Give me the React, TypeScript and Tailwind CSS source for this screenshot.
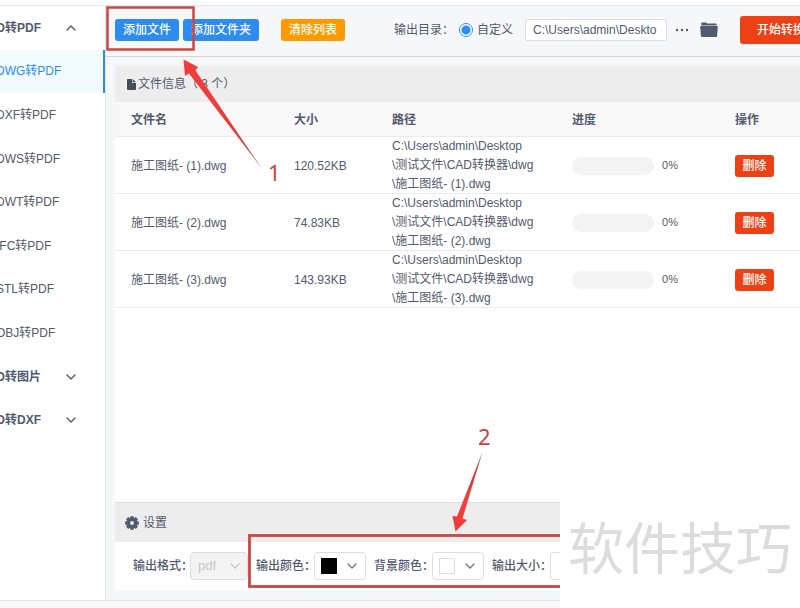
import { useState } from 'react';
import { ChevronDown, ChevronUp } from 'lucide-react';

const formats = ['DWG转PDF', 'DXF转PDF', 'DWS转PDF', 'DWT转PDF', 'IFC转PDF', 'STL转PDF', 'OBJ转PDF'];

const initialFiles = [
  { id: 1, size: '120.52KB', progress: 0 },
  { id: 2, size: '74.83KB', progress: 0 },
  { id: 3, size: '143.93KB', progress: 0 },
];

function FileIcon() {
  return (
    <svg width="9" height="11" viewBox="0 0 9 11" fill="#464c5b" aria-hidden="true">
      <path d="M.8 0H5v3.400c0 .4.200.6.600.6H9v6.200c0 .5-.3.8-.8.8H.8c-.5 0-.8-.3-.8-.8V.8C0 .3.300 0 .8 0z" />
      <path d="M5.700 0L9 3.300H5.700z" />
    </svg>
  );
}

function FolderIcon() {
  return (
    <svg width="18" height="16" viewBox="0 0 18 16" fill="#515a6e" aria-hidden="true">
      <path d="M1.300 3.500V1.600C1.300.9 1.700.5 2.400.5h3.400c.5 0 .8.2 1.100.5l.4.500h8.300c.7 0 1.100.4 1.100 1.100v.9z" />
      <path d="M1 4.100h16c.6 0 .9.300.8.9l-.7 9c-.1.600-.5.900-1 .9H1.900c-.600 0-.9-.3-1-.9l-.7-9c-.1-.6.200-.9.800-.9z" />
    </svg>
  );
}

function GearIcon() {
  return (
    <svg width="14" height="14" viewBox="0 0 14 14" aria-hidden="true">
      <g fill="#515a6e">
        <rect x="5.200" y="0.200" width="3.600" height="13.600" rx="0.600" />
        <rect x="5.200" y="0.200" width="3.600" height="13.600" rx="0.600" transform="rotate(45 7 7)" />
        <rect x="5.200" y="0.200" width="3.600" height="13.600" rx="0.600" transform="rotate(90 7 7)" />
        <rect x="5.200" y="0.200" width="3.600" height="13.600" rx="0.600" transform="rotate(135 7 7)" />
        <circle cx="7" cy="7" r="5.100" />
      </g>
      <circle cx="7" cy="7" r="1.900" fill="#ededed" />
    </svg>
  );
}

function ColorPicker({ label, swatch }: { label: string; swatch: string }) {
  return (
    <div className="flex shrink-0 items-center gap-[9px]">
      <span className="w-[49px] whitespace-nowrap font-medium">{label}：</span>
      <button aria-label={label} className="flex h-7 w-[52px] items-center justify-between rounded border border-[#dcdee2] bg-white pr-[5px] pl-1.5">
        <span className={`size-4 ${swatch}`}></span>
        <ChevronDown size={16} color="#707684" />
      </button>
    </div>
  );
}

export default function App() {
  const [files, setFiles] = useState(initialFiles);

  return (
    <div className="relative flex min-h-screen flex-col overflow-hidden bg-[#fafafa] pt-[5px] font-['Liberation_Sans','Noto_Sans_CJK_SC',sans-serif] text-xs text-[#515a6e] before:absolute before:inset-x-0 before:top-0 before:h-[5px] before:bg-white">
      <div className="flex min-w-0 flex-1 border-y border-[#e4e6ea]">
        <aside className="w-[106px] shrink-0 overflow-hidden border-r border-[#e2e4e8] bg-white">
          <nav className="-ml-6 grid h-[436px] auto-rows-fr">
            <button className="flex items-center justify-between pr-[26px] pl-[3px] font-bold">
              CAD转PDF <ChevronUp size={16} />
            </button>
            {formats.map((name, i) => (
              <a
                key={name}
                href="#"
                className={`flex items-center pl-5 ${i === 0 ? 'border-r-2 border-[#2d8cf0] bg-[#f0faff] text-[#2d8cf0]' : ''}`}
              >
                {name}
              </a>
            ))}
            <button className="flex items-center justify-between pr-[26px] pl-[3px] font-bold">
              CAD转图片 <ChevronDown size={16} />
            </button>
            <button className="flex items-center justify-between pr-[26px] pl-[3px] font-bold">
              CAD转DXF <ChevronDown size={16} />
            </button>
          </nav>
        </aside>

        <main className="flex min-w-0 flex-1 flex-col overflow-hidden bg-[#f5f7f9]">
          <header className="flex h-[51px] items-center border-b border-[#d3d5d9] pb-0.5 pl-[9px] whitespace-nowrap">
            <button className="h-[22px] w-16 shrink-0 rounded-[3px] bg-[#2d8cf0] font-medium text-white">添加文件</button>
            <button className="ml-1 h-[22px] w-[76px] shrink-0 rounded-[3px] bg-[#2d8cf0] font-medium text-white">添加文件夹</button>
            <button className="ml-[22px] h-[22px] w-16 shrink-0 rounded-[3px] bg-[#ff9900] font-medium text-white">清除列表</button>
            <span className="ml-[49px] w-[65px] shrink-0">输出目录：</span>
            <label className="flex shrink-0 items-center gap-1">
              <input
                type="radio"
                name="output"
                defaultChecked
                className="size-3.5 appearance-none rounded-full border border-[#2d8cf0] bg-white checked:bg-[radial-gradient(circle,#2d8cf0_4px,#fff_5px)]"
              />
              自定义
            </label>
            <input
              aria-label="输出目录"
              defaultValue="C:\Users\admin\Deskto"
              className="ml-3 h-[22px] w-[142px] shrink-0 rounded-xs border border-[#dcdee2] bg-white px-[7px]"
            />
            <button aria-label="选择目录" className="ml-2 shrink-0">
              <svg width="14" height="4" viewBox="0 0 14 4" fill="#515a6e" aria-hidden="true">
                <circle cx="2" cy="2" r="1.200" />
                <circle cx="7" cy="2" r="1.200" />
                <circle cx="12" cy="2" r="1.200" />
              </svg>
            </button>
            <button aria-label="打开文件夹" className="ml-[11px] shrink-0">
              <FolderIcon />
            </button>
            <button className="ml-[22px] h-7 w-[82px] shrink-0 rounded-[3px] bg-[#ed4014] font-medium text-white">开始转换</button>
          </header>

          <div className="flex flex-1 flex-col pt-[9px] pb-2.5 pl-[9px]">
            <h2 className="flex h-9 items-center gap-0.5 bg-[#ededed] pl-3">
              <FileIcon /> 文件信息（ {files.length} 个）
            </h2>
            <section className="flex-1 overflow-hidden bg-white">
              <table className="w-full min-w-[685px] table-fixed text-left">
                <thead>
                  <tr className="h-[35px] bg-[#f8f8f9] shadow-[inset_0_-1px_0_#e8eaec]">
                    <th className="w-[163px] pl-4">文件名</th>
                    <th className="w-[98px] pl-4">大小</th>
                    <th className="w-[180px] pl-4">路径</th>
                    <th className="w-[163px] pl-4">进度</th>
                    <th className="pl-4">操作</th>
                  </tr>
                </thead>
                <tbody>
                  {files.map((file) => (
                    <tr key={file.id} className="h-[57px] shadow-[inset_0_-1px_0_#e8eaec]">
                      <td className="pl-4">施工图纸- ({file.id}).dwg</td>
                      <td className="pl-4">{file.size}</td>
                      <td className="pl-4 leading-[19px]">
                        C:\Users\admin\Desktop
                        <br />
                        \测试文件\CAD转换器\dwg
                        <br />
                        \施工图纸- ({file.id}).dwg
                      </td>
                      <td className="pl-4">
                        <div className="flex items-center gap-2">
                          <div className="h-[18px] w-[82px] overflow-hidden rounded-full bg-[#f3f3f3]">
                            <div className="h-full bg-[#2d8cf0]" style={{ width: `${file.progress}%` }}></div>
                          </div>
                          <span className="text-[11px]">{file.progress}%</span>
                        </div>
                      </td>
                      <td className="pl-4">
                        <button
                          onClick={() => setFiles(files.filter((f) => f.id !== file.id))}
                          className="h-[22px] w-[39px] rounded-[3px] bg-[#ed4014] font-medium text-white"
                        >
                          删除
                        </button>
                      </td>
                    </tr>
                  ))}
                </tbody>
              </table>
            </section>

            <h2 className="flex h-10 items-center gap-1 border-t border-[#dcdee2] bg-[#ededed] pl-2.5">
              <GearIcon /> 设置
            </h2>
            <section className="flex h-12 items-center gap-2 bg-white pl-[18px]">
              <div className="flex shrink-0 items-center gap-2">
                <label htmlFor="format" className="w-[49px] whitespace-nowrap font-medium">输出格式：</label>
                <span className="relative">
                  <select id="format" disabled className="h-7 w-[58px] appearance-none rounded border border-[#dcdee2] bg-[#f3f3f3] pl-[7px] text-[13px] text-[#c5c8ce] opacity-100">
                    <option>pdf</option>
                  </select>
                  <ChevronDown size={16} color="#c5c8ce" className="absolute top-1.5 right-[5px]" />
                </span>
              </div>
              <ColorPicker label="输出颜色" swatch="bg-black" />
              <ColorPicker label="背景颜色" swatch="border border-[#dcdee2] bg-white" />
              <div className="flex shrink-0 items-center gap-[9px]">
                <label htmlFor="size" className="w-[49px] whitespace-nowrap font-medium">输出大小：</label>
                <select id="size" className="h-7 w-24 appearance-none rounded border border-[#dcdee2] bg-white pl-2">
                  <option>自动</option>
                </select>
              </div>
            </section>
          </div>
        </main>
      </div>
      <footer className="h-[7px]"></footer>

      {/* step markers drawn over the window */}
      <svg className="pointer-events-none absolute top-0 left-0" width="800" height="608" viewBox="0 0 800 608" aria-hidden="true">
        <defs>
          <linearGradient id="arrow1" x1="0" y1="0" x2="1" y2="1">
            <stop offset="0.400" stopColor="#f23c3b" />
            <stop offset="1" stopColor="#b94444" />
          </linearGradient>
          <linearGradient id="arrow2" x1="0" y1="1" x2="0" y2="0">
            <stop offset="0.400" stopColor="#f23c3b" />
            <stop offset="1" stopColor="#b94444" />
          </linearGradient>
        </defs>
        <rect x="107.500" y="7.500" width="86" height="42" fill="none" stroke="#c94745" strokeWidth="2.500" />
        <rect x="249.500" y="535.500" width="340" height="51" fill="none" stroke="#c94745" strokeWidth="2.800" />
        <path d="M183.500 59.500L198 67l-2.500 3.500L261.500 168L189 73.500L185 76z" fill="url(#arrow1)" />
        <path d="M455.500 531.500L452.500 516l4.500.5L482.500 452L462.500 518.500l4.500 1.500z" fill="url(#arrow2)" />
      </svg>
      <span className="absolute top-[157px] left-[268px] font-['Noto_Sans',sans-serif] text-[22px] leading-[30px] text-[#d8393b]">1</span>
      <span className="absolute top-[421px] left-[478px] font-['Noto_Sans',sans-serif] text-[22px] leading-[30px] text-[#d8393b]">2</span>

      <div className="absolute right-0 bottom-0 flex h-[106px] w-[240px] items-center justify-center bg-white pb-5 font-['Noto_Sans_CJK_SC',sans-serif] text-[56px] leading-none whitespace-nowrap text-[#dcdcdc]">
        软件技巧
      </div>
    </div>
  );
}
